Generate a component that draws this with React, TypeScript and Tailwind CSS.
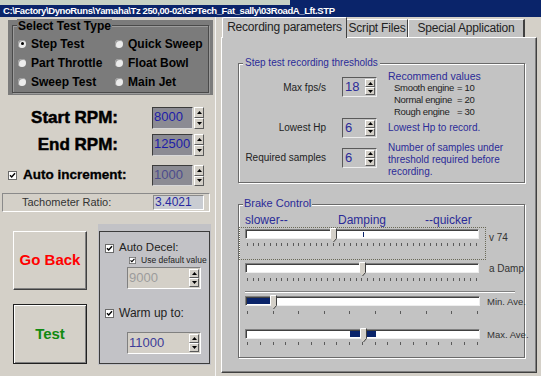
import React from 'react';

const raised = 'bg-[#d4d0c8] border border-t-white border-l-white border-r-[#5a5a5a] border-b-[#5a5a5a]';

const Arrow = ({ down = false }: { down?: boolean }) => (
  <svg width="5" height="3" viewBox="0 0 5 3">
    <polygon points={down ? '0,0 5,0 2.5,3' : '2.5,0 5,3 0,3'} fill="#000" />
  </svg>
);

const Spin = ({ className = '' }: { className?: string }) => (
  <div className={`flex flex-col w-[10px] ${className}`}>
    <div className={`flex-1 flex items-center justify-center ${raised}`}>
      <Arrow />
    </div>
    <div className={`flex-1 flex items-center justify-center ${raised}`}>
      <Arrow down />
    </div>
  </div>
);

const Radio = ({ on = false }: { on?: boolean }) => (
  <span className="w-[8px] h-[8px] rounded-full bg-[#ececec] shadow-[inset_1px_1px_0_#9a9a9a] flex items-center justify-center shrink-0">
    {on && <span className="w-[3px] h-[3px] rounded-full bg-black" />}
  </span>
);

const Check = ({ size = 9 }: { size?: number }) => (
  <svg width={size} height={size} viewBox="0 0 9 9" className="shrink-0">
    <rect x="0.5" y="0.5" width="8" height="8" fill="#fff" stroke="#6a6a6a" />
    <path d="M2 4.2 L3.7 6 L7 2.3" fill="none" stroke="#000" strokeWidth="1.4" />
  </svg>
);

const Thumb = ({ left, top }: { left: number; top: number }) => (
  <svg width="7" height="15" viewBox="0 0 7 15" className="absolute" style={{ left, top }}>
    <polygon points="0.5,0.5 6.5,0.5 6.5,10.5 3.5,14 0.5,10.5" fill="#d4d0c8" />
    <polyline points="0.5,10.5 0.5,0.5 6.5,0.5" fill="none" stroke="#fff" />
    <polyline points="6.5,0.5 6.5,10.5 3.5,14" fill="none" stroke="#404040" />
  </svg>
);

const Ticks = ({ n, w }: { n: number; w: number }) => (
  <div className="flex justify-between h-[3px] ml-[2px]" style={{ width: w }}>
    {Array.from({ length: n }).map((_, i) => (
      <span key={i} className="w-[1px] h-[3px] bg-[#5a5a5a]" />
    ))}
  </div>
);

const track = 'relative bg-white h-[10px] border border-[#808080] border-b-[#eeeeee] border-r-[#eeeeee] shadow-[inset_1px_1px_0_#404040]';

const radios = [
  ['Step Test', true],
  ['Quick Sweep', false],
  ['Part Throttle', false],
  ['Float Bowl', false],
  ['Sweep Test', false],
  ['Main Jet', false],
] as const;

const LeftPanel = () => (
  <div className="w-[216px] h-full flex flex-col border-r border-[#f4f4f4]">
    <div className="mt-[3px] ml-[8px] w-[205px] h-[75px] bg-[#7b7b7b] px-[4px] pt-[5px]">
      <div className="h-[68px] border border-[#4a4a4a] shadow-[inset_1px_1px_0_#9c9c9c,1px_1px_0_#9c9c9c]">
        <div className="-mt-[7px] ml-[4px] px-[1px] w-fit bg-[#7b7b7b] text-[12px] font-bold leading-[14px] text-black whitespace-nowrap">
          Select Test Type
        </div>
        <div className="grid grid-cols-[97px_1fr] mt-[1px] pl-[5px]">
          {radios.map(([label, on]) => (
            <div key={label} className="h-[19px] flex items-center gap-[5px] text-[12px] font-bold text-black whitespace-nowrap">
              <Radio on={on} />
              {label}
            </div>
          ))}
        </div>
      </div>
    </div>

    <div className="mt-[12px] flex items-center h-[22px] pr-[11px]">
      <div className="w-[118px] text-right text-[17px] font-bold text-black [-webkit-text-stroke:0.5px_black] whitespace-nowrap">Start RPM:</div>
      <div className="flex-1" />
      <div className="w-[41px] h-[22px] bg-[#8b8b93] border border-[#3c3c3c] border-b-[#d8d8d8] border-r-[#d8d8d8] pl-[1px] text-[13px] leading-[18px] text-[#1c1ca8]">8000</div>
      <Spin className="ml-[1px] h-[22px]" />
    </div>

    <div className="mt-[5px] flex items-center h-[22px] pr-[11px]">
      <div className="w-[118px] text-right text-[17px] font-bold text-black [-webkit-text-stroke:0.5px_black] whitespace-nowrap">End RPM:</div>
      <div className="flex-1" />
      <div className="w-[41px] h-[22px] bg-[#8b8b93] border border-[#3c3c3c] border-b-[#d8d8d8] border-r-[#d8d8d8] pl-[1px] text-[13px] leading-[18px] text-[#1c1ca8]">12500</div>
      <Spin className="ml-[1px] h-[22px]" />
    </div>

    <div className="mt-[9px] flex items-center h-[21px] pr-[11px]">
      <div className="ml-[8px]"><Check /></div>
      <div className="ml-[6px] text-[13.5px] font-bold text-black [-webkit-text-stroke:0.3px_black] whitespace-nowrap">Auto increment:</div>
      <div className="flex-1" />
      <div className="w-[41px] h-[21px] bg-[#8b8b93] border border-[#3c3c3c] border-b-[#d8d8d8] border-r-[#d8d8d8] pl-[1px] text-[13px] leading-[18px] text-[#4c4c8c]">1000</div>
      <Spin className="ml-[1px] h-[21px]" />
    </div>

    <div className="mt-[7px] ml-[2px] w-[208px] h-[19px] flex items-center border border-[#8a8a8a] border-b-white border-r-white">
      <div className="ml-[19px] text-[11px] text-[#333] whitespace-nowrap">Tachometer Ratio:</div>
      <div className="ml-auto mr-[5px] w-[51px] h-[15px] bg-[#c9ccd2] border border-[#8a8a8a] border-b-white border-r-white pl-[1px] text-[12px] leading-[13px] text-[#2828a0]">3.4021</div>
    </div>

    <div className="mt-[12px] flex">
      <div className="ml-[13px] mt-[7px] w-[74px] flex flex-col gap-[14px]">
        <div className="h-[59px] bg-[#d4d0c8] border border-t-white border-l-white border-r-[#404040] border-b-[#404040] shadow-[inset_-1px_-1px_0_#808080] flex items-center justify-center text-[15px] font-bold text-[#ff0000] whitespace-nowrap">
          Go Back
        </div>
        <div className="h-[60px] bg-[#d4d0c8] border border-[#202020] shadow-[inset_1px_1px_0_#fff,inset_-1px_-1px_0_#808080] flex items-center justify-center text-[15px] font-bold text-[#118a11]">
          Test
        </div>
      </div>
      <div className="ml-[11px] w-[113px] h-[141px] bg-[#c2c2c6] pt-[7px] px-[1px] pb-[1px]">
        <div className="h-full border border-[#3c3c3c] flex flex-col">
          <div className="mt-[9px] h-[14px] pl-[5px] flex items-center">
            <Check />
            <span className="ml-[5px] text-[11.5px] text-[#222] whitespace-nowrap">Auto Decel:</span>
          </div>
          <div className="h-[11px] pl-[29px] flex items-center">
            <Check size={7} />
            <span className="ml-[5px] text-[8.5px] text-[#222] whitespace-nowrap">Use default value</span>
          </div>
          <div className="mt-[1px] ml-[27px] w-[74px] h-[22px] flex bg-[#d4d0c8] border border-[#808080] border-b-white border-r-white">
            <div className="flex-1 pl-[1px] text-[13px] leading-[19px] text-[#9c9c9c]">9000</div>
            <Spin className="m-[1px]" />
          </div>
          <div className="mt-[17px] h-[14px] pl-[5px] flex items-center">
            <Check />
            <span className="ml-[5px] text-[12px] text-[#222] whitespace-nowrap">Warm up to:</span>
          </div>
          <div className="mt-[12px] ml-[27px] w-[74px] h-[22px] flex bg-[#d4d0c8] border border-[#808080] border-b-white border-r-white">
            <div className="flex-1 pl-[1px] text-[13px] leading-[19px] text-[#3c3c98]">11000</div>
            <Spin className="m-[1px]" />
          </div>
        </div>
      </div>
    </div>
  </div>
);

const SmallInput = ({ value }: { value: string }) => (
  <div className="w-[35px] h-[20px] flex bg-[#c3c3c3] border border-[#5a5a5a] border-b-[#eeeeee] border-r-[#eeeeee]">
    <div className="flex-1 pl-[2px] text-[13px] leading-[17px] text-[#2b2b98]">{value}</div>
    <Spin className="m-[1px] w-[8px]" />
  </div>
);

const RightPanel = () => (
  <div className="flex-1 flex flex-col pl-[5px]">
    <div className="h-[20px] flex items-end whitespace-nowrap text-[12px] tracking-[-0.2px] text-[#222]">
      <div className="relative z-10 -mb-[1px] ml-[1px] w-[125px] h-[21px] bg-[#c3c3c3] border-t border-l border-white border-r border-r-[#404040] rounded-tl-[2px] leading-[18px] text-center">
        Recording parameters
      </div>
      <div className="w-[61px] h-[18px] bg-[#c3c3c3] border-t border-white border-r border-r-[#404040] leading-[17px] text-center">
        Script Files
      </div>
      <div className="w-[117px] h-[18px] bg-[#c3c3c3] border-t border-l border-white border-r-2 border-r-[#404040] leading-[17px] text-center">
        Special Application
      </div>
    </div>

    <div className="w-[316px] h-[336px] bg-[#c3c3c3] border border-t-white border-l-white border-r-[#404040] border-b-[#404040] shadow-[inset_-1px_-1px_0_#808080] flex flex-col whitespace-nowrap">
      <div className="mt-[25px] ml-[16px] w-[287px] h-[120px] border border-[#6a6a6a] shadow-[inset_1px_1px_0_#fff,1px_1px_0_#fff]">
        <div className="-mt-[7px] ml-[4px] px-[2px] w-fit bg-[#c3c3c3] text-[10px] leading-[12px] text-[#2b2b98]">
          Step test recording thresholds
        </div>

        <div className="mt-[1px] flex items-start">
          <div className="mt-[7px] h-[20px] flex items-center">
            <div className="w-[87px] text-right text-[10px] text-[#222]">Max fps/s</div>
            <div className="ml-[16px]"><SmallInput value="18" /></div>
          </div>
          <div className="ml-[11px] text-[10px] leading-[12px]">
            <div className="text-[10.5px] text-[#2b2b98]">Recommend values</div>
            <div className="pl-[6px] text-[9.5px] tracking-[-0.3px] text-[#222] flex"><span className="w-[63px]">Smooth engine</span>= 10</div>
            <div className="pl-[6px] text-[9.5px] tracking-[-0.3px] text-[#222] flex"><span className="w-[63px]">Normal engine</span>= 20</div>
            <div className="pl-[6px] text-[9.5px] tracking-[-0.3px] text-[#222] flex"><span className="w-[63px]">Rough engine</span>= 30</div>
          </div>
        </div>

        <div className="h-[19px] flex items-center">
          <div className="w-[87px] text-right text-[10px] text-[#222]">Lowest Hp</div>
          <div className="ml-[16px]"><SmallInput value="6" /></div>
          <div className="ml-[11px] text-[10px] text-[#2b2b98]">Lowest Hp to record.</div>
        </div>

        <div className="mt-[11px] flex items-start">
          <div className="h-[19px] flex items-center">
            <div className="w-[87px] text-right text-[10px] text-[#222]">Required samples</div>
            <div className="ml-[16px]"><SmallInput value="6" /></div>
          </div>
          <div className="ml-[11px] -mt-[6px] text-[10px] leading-[12px] text-[#2b2b98]">
            <div>Number of samples under</div>
            <div>threshold required before</div>
            <div>recording.</div>
          </div>
        </div>
      </div>

      <div className="mt-[21px] ml-[16px] w-[287px] h-[154px] border border-[#6a6a6a] shadow-[inset_1px_1px_0_#fff,1px_1px_0_#fff]">
        <div className="-mt-[8px] ml-[4px] px-[1px] w-fit bg-[#c3c3c3] text-[11px] leading-[13px] text-[#2b2b98]">
          Brake Control
        </div>
        <div className="mt-[3px] pl-[6px] flex text-[12px] leading-[14px] text-[#2b2b98]">
          <span className="w-[93px]">slower--</span>
          <span className="w-[87px]">Damping</span>
          <span>--quicker</span>
        </div>

        <div className="flex items-start">
          <div className="w-[247px] h-[33px] border border-dotted border-[#6a6a58] pl-[5px] pt-[1px]">
            <div className={`${track} w-[234px]`}>
              <span className="absolute left-[117px] top-[2px] w-[1px] h-[5px] bg-[#0a246a]" />
              <Thumb left={84} top={-2} />
            </div>
            <div className="mt-[4px]"><Ticks n={41} w={230} /></div>
          </div>
          <div className="ml-[3px] mt-[5px] text-[10px] leading-[12px] text-[#333]">v 74</div>
        </div>

        <div className="mt-[3px] flex items-start">
          <div className="ml-[6px]">
            <div className={`${track} w-[234px]`}>
              <Thumb left={113} top={-2} />
            </div>
            <div className="mt-[5px]"><Ticks n={41} w={230} /></div>
          </div>
          <div className="ml-[10px] text-[10px] leading-[12px] text-[#333]">a Damp</div>
        </div>

        <div className="mt-[10px] ml-[6px] w-[270px] h-[2px] border-t border-[#808080] border-b border-b-white" />

        <div className="mt-[3px] flex items-start">
          <div className="ml-[6px]">
            <div className={`${track} w-[235px]`}>
              <span className="absolute left-[1px] top-[1px] w-[23px] h-[6px] bg-[#0a246a]" />
              <Thumb left={24} top={-2} />
            </div>
            <div className="mt-[5px]"><Ticks n={10} w={231} /></div>
          </div>
          <div className="ml-[7px] text-[9.5px] leading-[12px] text-[#333]">Min. Ave.</div>
        </div>

        <div className="mt-[15px] flex items-start">
          <div className="ml-[6px]">
            <div className={`${track} w-[235px]`}>
              <span className="absolute left-[104px] top-[1px] w-[10px] h-[6px] bg-[#0a246a]" />
              <span className="absolute left-[121px] top-[1px] w-[9px] h-[6px] bg-[#0a246a]" />
              <Thumb left={114} top={-2} />
            </div>
            <div className="mt-[3px]"><Ticks n={19} w={231} /></div>
          </div>
          <div className="ml-[7px] text-[9.5px] leading-[12px] text-[#333]">Max. Ave.</div>
        </div>
      </div>
    </div>
  </div>
);

const App = () => {
  return (
    <div className="w-[541px] h-[376px] overflow-hidden bg-[#d4d0c8] flex flex-col font-['Liberation_Sans',Arial,sans-serif]">
      <div className="h-[5px] flex">
        <div className="w-[290px] bg-[#c6d0c4]" />
        <div className="flex-1 bg-[#0a246a]" />
      </div>
      <div className="h-[12px] bg-[#0a246a] pl-[3px] text-[9.5px] font-bold leading-[12px] tracking-[-0.4px] text-white whitespace-nowrap">
        C:\Factory\DynoRuns\Yamaha\Tz 250,00-02\GPTech_Fat_sally\03RoadA_Lft.STP
      </div>
      <div className="flex h-[359px]">
        <LeftPanel />
        <RightPanel />
      </div>
    </div>
  );
};

export default App;
